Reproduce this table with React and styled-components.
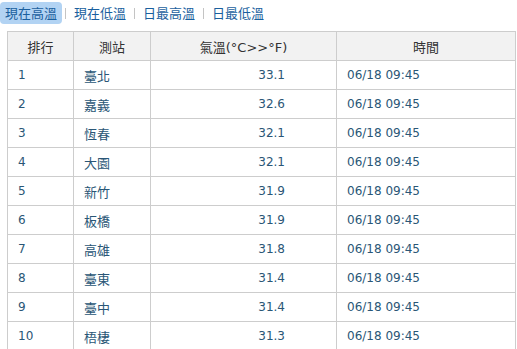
import React from 'react'
import styled, { createGlobalStyle } from 'styled-components'

const GlobalStyle = createGlobalStyle`
  body {
    margin: 0;
    background: #ffffff;
    font-family: "DejaVu Sans", "Noto Sans CJK TC", sans-serif;
  }
`

const Page = styled.div`
  width: 517px;
  height: 349px;
  overflow: hidden;
`

const Tabs = styled.div`
  display: flex;
  align-items: center;
  height: 22px;
  margin-top: 2px;
`

const Tab = styled.div`
  height: 22px;
  line-height: 22px;
  padding: 0 5px;
  border-radius: 4px;
  font-family: "Noto Sans CJK TC", sans-serif;
  font-size: 13px;
  color: #1a5f9e;
  background: ${p => (p.$active ? '#b2d3f3' : 'transparent')};
  cursor: pointer;
`

const Sep = styled.span`
  width: 1px;
  height: 11px;
  margin: 0 3px;
  background: #c4c4c4;
`

const Table = styled.table`
  margin: 7px 0 0 7px;
  width: 508px;
  border-collapse: collapse;
  table-layout: fixed;
`

const Th = styled.th`
  height: 28px;
  padding: 0;
  border: 1px solid #cdcdcd;
  background: #f2f2f2;
  font-family: "DejaVu Sans", "Noto Sans CJK TC", sans-serif;
  font-weight: normal;
  font-size: 13px;
  color: #333333;
  text-align: center;
`

const Td = styled.td`
  height: 28px;
  padding: ${p => (p.$right ? '0 51px 0 0' : '0 0 0 10px')};
  border: 1px solid #cdcdcd;
  font-family: ${p => (p.$cjk ? '"Noto Sans CJK TC", sans-serif' : '"DejaVu Sans", sans-serif')};
  font-size: ${p => (p.$cjk ? '13px' : '12px')};
  color: #2a5676;
  text-align: ${p => (p.$right ? 'right' : 'left')};
  white-space: nowrap;
`

const tabs = ['現在高溫', '現在低溫', '日最高溫', '日最低溫']

const rows = [
  ['1', '臺北', '33.1'],
  ['2', '嘉義', '32.6'],
  ['3', '恆春', '32.1'],
  ['4', '大園', '32.1'],
  ['5', '新竹', '31.9'],
  ['6', '板橋', '31.9'],
  ['7', '高雄', '31.8'],
  ['8', '臺東', '31.4'],
  ['9', '臺中', '31.4'],
  ['10', '梧棲', '31.3'],
]

function App() {
  return (
    <Page>
      <GlobalStyle />
      <Tabs>
        {tabs.map((t, i) => (
          <React.Fragment key={t}>
            {i > 0 && <Sep />}
            <Tab $active={i === 0}>{t}</Tab>
          </React.Fragment>
        ))}
      </Tabs>
      <Table>
        <colgroup>
          <col style={{ width: 66 }} />
          <col style={{ width: 77 }} />
          <col style={{ width: 186 }} />
          <col style={{ width: 179 }} />
        </colgroup>
        <thead>
          <tr>
            <Th>排行</Th>
            <Th>測站</Th>
            <Th>氣溫(°C&gt;&gt;°F)</Th>
            <Th>時間</Th>
          </tr>
        </thead>
        <tbody>
          {rows.map(r => (
            <tr key={r[0]}>
              <Td>{r[0]}</Td>
              <Td $cjk>{r[1]}</Td>
              <Td $right>{r[2]}</Td>
              <Td>06/18 09:45</Td>
            </tr>
          ))}
        </tbody>
      </Table>
    </Page>
  )
}

export default App
